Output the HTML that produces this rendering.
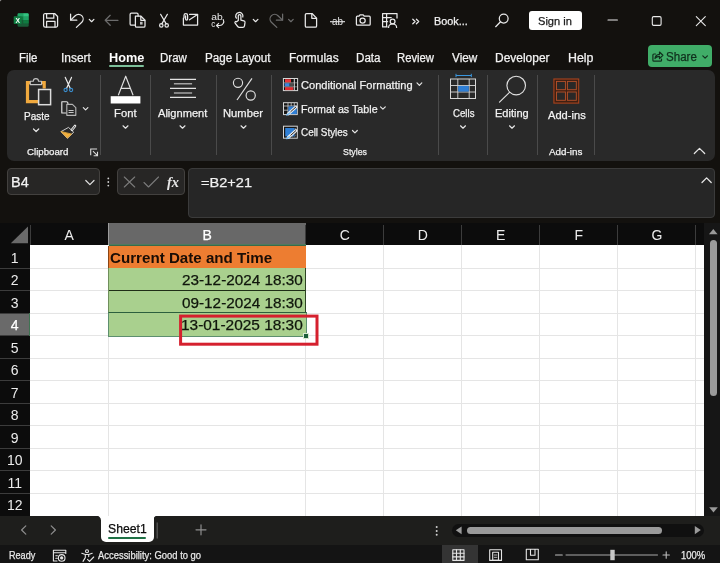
<!DOCTYPE html>
<html lang="en"><head><meta charset="utf-8"><title>Excel</title>
<style>
html,body{margin:0;padding:0;}
body{width:720px;height:563px;overflow:hidden;position:relative;background:#13110e;font-family:"Liberation Sans",sans-serif;}
div,span,svg{position:absolute;box-sizing:border-box;}
.t{white-space:nowrap;transform-origin:0 0;-webkit-text-stroke:0.25px currentColor;}
.ic{left:0;top:0;will-change:transform;}
.ribbon{left:7px;top:70px;width:708px;height:91px;background:#292929;border-radius:7px;}
.sep{width:1px;top:75px;height:80px;background:#4a4a4a;}
.signin{left:529px;top:11px;width:52.5px;height:19px;background:#fff;border-radius:3px;}
.share{left:648px;top:44.5px;width:63.5px;height:22.5px;background:#40ad68;border-radius:4px;}
.homeul{left:109px;top:64.5px;width:34.5px;height:2px;background:#7dc09a;border-radius:1px;}
.namebox{left:6.5px;top:168px;width:93.5px;height:27px;background:#272625;border:1px solid #43413f;border-radius:4px;}
.fxbox{left:117px;top:168px;width:68px;height:27px;background:#272625;border:1px solid #43413f;border-radius:4px;}
.fbox{left:188px;top:168px;width:527px;height:50px;background:#262626;border:1px solid #3b3b3b;border-radius:4px;}
.grid{left:0;top:223px;width:704px;height:292.5px;background:#fff;overflow:hidden;}
.colhead{left:0;top:0;width:704px;height:22px;background:#0c0c0c;}
.rowhead{left:0;top:22px;width:30px;height:271px;background:#0c0c0c;}
.vl{top:22px;width:1px;height:271px;background:#e5e5e5;}
.hl{left:30px;height:1px;width:674px;background:#e5e5e5;}
.chl{top:2px;width:1px;height:20px;background:#3c3c3c;}
.rhl{left:0;width:30px;height:1px;background:#3c3c3c;}
.vscroll{left:704px;top:223px;width:16px;height:292.5px;background:#161616;}
.vthumb{left:710px;top:240px;width:7px;height:156px;background:#9a9a9a;border-radius:3.5px;}
.tabbar{left:0;top:515.5px;width:720px;height:29.5px;background:#1e1e1c;}
.sheettab{left:100.5px;top:515.5px;width:53px;height:26.5px;background:#fff;border-radius:0 0 5px 5px;}
.sheetul{left:108px;top:536.8px;width:38px;height:2.2px;background:#1e7145;border-radius:1px;}
.status{left:0;top:545px;width:720px;height:18px;background:#141414;}
.viewsel{left:441.5px;top:545px;width:36px;height:18px;background:#343434;}
.hscroll{left:452px;top:524px;width:252px;height:13px;background:#101010;border-radius:6.5px;}
.hthumb{left:467px;top:526.5px;width:194.5px;height:7.7px;background:#9a9a9a;border-radius:4px;}
.texts{left:0;top:0;width:720px;height:563px;will-change:transform;}

</style></head>
<body>
<div class="ribbon"></div>
<div class="sep" style="left:100px"></div>
<div class="sep" style="left:150px"></div>
<div class="sep" style="left:216px"></div>
<div class="sep" style="left:271px"></div>
<div class="sep" style="left:438px"></div>
<div class="sep" style="left:487px"></div>
<div class="sep" style="left:537px"></div>
<div class="sep" style="left:594px"></div>
<div class="signin"></div>
<div class="share"></div>
<div class="homeul"></div>
<div class="namebox"></div>
<div class="fxbox"></div>
<div class="fbox"></div>
<div class="grid">
  <div class="colhead"></div>
  <div class="rowhead"></div>
  <!-- selected headers -->
  <div style="left:108.5px;top:0;width:197.5px;height:22px;background:#686868;"></div>
  <div style="left:0;top:90px;width:30px;height:22.5px;background:#6a6a6a;"></div>
  <!-- column header separators -->
  <div class="chl" style="left:30px"></div>
  <div class="chl" style="left:108px;background:#9c9c9c;top:0;height:22px"></div>
  <div class="chl" style="left:305px"></div>
  <div class="chl" style="left:383px"></div>
  <div class="chl" style="left:461px"></div>
  <div class="chl" style="left:539px"></div>
  <div class="chl" style="left:617px"></div>
  <div class="chl" style="left:695px"></div>
  <!-- vertical grid lines -->
  <div class="vl" style="left:108px"></div>
  <div class="vl" style="left:305px"></div>
  <div class="vl" style="left:383px"></div>
  <div class="vl" style="left:461px"></div>
  <div class="vl" style="left:539px"></div>
  <div class="vl" style="left:617px"></div>
  <div class="vl" style="left:695px"></div>
  <!-- horizontal grid lines -->
  <div class="hl" style="top:44.5px"></div>
  <div class="hl" style="top:67px"></div>
  <div class="hl" style="top:89.5px"></div>
  <div class="hl" style="top:112px"></div>
  <div class="hl" style="top:134.5px"></div>
  <div class="hl" style="top:157px"></div>
  <div class="hl" style="top:179.5px"></div>
  <div class="hl" style="top:202px"></div>
  <div class="hl" style="top:224.5px"></div>
  <div class="hl" style="top:247px"></div>
  <div class="hl" style="top:269.5px"></div>
  <div class="rhl" style="top:44.5px"></div>
  <div class="rhl" style="top:67px"></div>
  <div class="rhl" style="top:89.5px"></div>
  <div class="rhl" style="top:112px"></div>
  <div class="rhl" style="top:134.5px"></div>
  <div class="rhl" style="top:157px"></div>
  <div class="rhl" style="top:179.5px"></div>
  <div class="rhl" style="top:202px"></div>
  <div class="rhl" style="top:224.5px"></div>
  <div class="rhl" style="top:247px"></div>
  <div class="rhl" style="top:269.5px"></div>
  <!-- filled cells -->
  <div style="left:108.5px;top:23px;width:197.5px;height:22px;background:#ed7d31;"></div>
  <div style="left:108px;top:23px;width:1px;height:22px;background:#8a4515;"></div>
  <div style="left:108px;top:45px;width:1px;height:67px;background:#6f8f5c;"></div>
  <div style="left:108.5px;top:45px;width:197.5px;height:67.5px;background:#a9d08e;"></div>
  <div style="left:108.5px;top:66.5px;width:197.5px;height:1px;background:#1f2e17;"></div>
  <div style="left:108.5px;top:89px;width:197.5px;height:1px;background:#1f2e17;"></div>
  <div style="left:305px;top:45px;width:1px;height:45px;background:#2d4423;"></div>
  <!-- selection -->
  <div style="left:107.5px;top:89px;width:199px;height:24.5px;border:1.5px solid #5d8f6f;border-top-color:#2c5f3d;"></div>
  <div style="left:108.5px;top:21px;width:197.5px;height:1px;background:#4f7a5e;"></div>
  <div style="left:108.5px;top:22px;width:197.5px;height:1px;background:#3a6a4b;"></div>
  <div style="left:28.5px;top:90px;width:1.5px;height:22.5px;background:#3f7352;"></div>
  <div style="left:304px;top:111px;width:3.500px;height:3.500px;background:#1b5e3a;outline:0.600px solid #d8ead0;"></div>
</div>
<div class="vscroll"></div>
<div class="vthumb"></div>
<div class="tabbar"></div>
<div class="sheettab"></div>
<div class="sheetul"></div>
<div class="hscroll"></div>
<div class="hthumb"></div>
<div class="status"></div>
<div class="viewsel"></div>

<svg class="ic" width="720" height="563" viewBox="0 0 720 563">
<!-- ===== title bar ===== -->
<g id="excel-logo">
  <rect x="17.6" y="13.3" width="11.1" height="13.4" rx="1.2" fill="#185c37"/>
  <path d="M17.6 14.5a1.2 1.2 0 0 1 1.2-1.2h4.4v3.4h-5.6z" fill="#21a366"/>
  <path d="M23.2 13.3h4.3a1.2 1.2 0 0 1 1.2 1.2v2.2h-5.5z" fill="#33c481"/>
  <rect x="17.6" y="16.7" width="5.6" height="3.4" fill="#107c41"/>
  <rect x="23.2" y="16.7" width="5.5" height="3.4" fill="#21a366"/>
  <rect x="17.6" y="20.1" width="5.6" height="3.3" fill="#185c37"/>
  <rect x="23.2" y="20.1" width="5.5" height="3.3" fill="#107c41"/>
  <rect x="13.7" y="16.2" width="8" height="7.8" rx="0.8" fill="#107c41"/>
  <text x="17.7" y="22.6" font-family="Liberation Sans, sans-serif" font-weight="bold" font-size="6.8" fill="#ffffff" text-anchor="middle">X</text>
</g>
<g fill="none" stroke="#e9e9e9" stroke-width="1.25" stroke-linecap="round" stroke-linejoin="round">
  <!-- save -->
  <path d="M45 13.5h9.6l3 3v9a1.6 1.6 0 0 1-1.6 1.6H45.2a1.6 1.6 0 0 1-1.6-1.6v-10.4a1.6 1.6 0 0 1 1.4-1.6z"/>
  <path d="M46.6 13.6v4.6h7.2v-4.6"/>
  <path d="M46.6 27v-5.6h8.4V27"/>
  <!-- undo -->
  <path d="M70.6 14v6.2h6.2"/>
  <path d="M70.9 19.9l4.3-4.2a4.6 4.6 0 0 1 6.6 6.5l-5.4 5.2"/>
  <!-- chevron -->
  <path d="M89.3 19.4l2.3 2.3 2.3-2.3"/>
  <!-- copy/paste docs -->
  <path d="M135.4 25.2h-4a1.3 1.3 0 0 1-1.3-1.3v-9.5a1.3 1.3 0 0 1 1.3-1.3h5.4a1.3 1.3 0 0 1 1.3 1.3v1.6"/>
  <path d="M135.4 16.2h5.6l4 4v5.7a1.3 1.3 0 0 1-1.3 1.3h-7a1.3 1.3 0 0 1-1.3-1.3z"/>
  <path d="M140.8 16.4v3.9h4"/>
  <!-- scissors -->
  <path d="M160.6 14.3l5.6 9.6M167.4 14.3l-5.6 9.6"/>
  <circle cx="161.3" cy="25.4" r="1.7"/>
  <circle cx="166.7" cy="25.4" r="1.7"/>
  <!-- envelope with clip -->
  <path d="M183.4 18v7h14.2v-10.6h-8"/>
  <path d="M189.5 19.8l8-5.2"/>
  <path d="M184 17.8v-2.4a1.8 1.8 0 0 1 3.6 0v3.6a1 1 0 0 1-2 0v-3.2"/>
  <!-- touch hand -->
  <path d="M238.3 20.5v-4.6a1.3 1.3 0 0 1 2.6 0v4.2l3 .7a1.5 1.5 0 0 1 1.1 1.6l-.5 3.4a1.8 1.8 0 0 1-1.8 1.5h-3.4a2 2 0 0 1-1.6-.8l-2.6-3.4a1 1 0 0 1 1.5-1.3z"/>
  <path d="M236.4 18.2a3.6 3.6 0 1 1 6.4-1.2"/>
  <path d="M253.3 19.4l2.3 2.3 2.3-2.3"/>
  <!-- new doc -->
  <path d="M305.3 14.8a1.3 1.3 0 0 1 1.3-1.3h5.4l4.6 4.6v7.8a1.3 1.3 0 0 1-1.3 1.3h-8.7a1.3 1.3 0 0 1-1.3-1.3z"/>
  <path d="M311.8 13.7v4.6h4.6"/>
  <!-- camera -->
  <path d="M356.4 17.2a1 1 0 0 1 1-1h1.6l1-1.4h3.2l1 1.4h5a1 1 0 0 1 1 1v7a1 1 0 0 1-1 1h-11.8a1 1 0 0 1-1-1z"/>
  <circle cx="362.6" cy="20.6" r="2.6"/>
  <!-- table/person -->
  <path d="M390 13.5h-7.4v13.4h4.6M382.600 17.500h8.600M386.6 13.600v13.2M382.600 21.5h5M390.500 13.500h6.500v4.500"/>
  <circle cx="392.6" cy="21.4" r="2.4"/>
  <path d="M388.6 27.400a4 3.400 0 0 1 8 0"/>
  <!-- >> -->
  <path d="M412.800 19.200l2.300 2.300-2.300 2.300M416.400 19.200l2.300 2.300-2.300 2.300"/>
  <!-- search -->
  <circle cx="503.700" cy="18.600" r="4.400"/>
  <path d="M500.500 21.800l-4.800 4.900"/>
  <!-- window controls -->
  <path d="M608 20h9.400" stroke-width="1.1"/>
  <rect x="652.300" y="16.600" width="8.800" height="8.800" rx="1.300" stroke-width="1.100"/>
  <path d="M696.300 16.600l9 9M705.300 16.600l-9 9" stroke-width="1.100"/>
</g>
<!-- greyed -->
<g fill="none" stroke="#6c6c6c" stroke-width="1.250" stroke-linecap="round" stroke-linejoin="round">
  <path d="M118 20.300h-12.800M110.200 15.300l-5 5 5 5"/>
  <path d="M282.600 14v6.200h-6.200"/>
  <path d="M282.300 19.900l-4.300-4.200a4.600 4.600 0 0 0-6.600 6.500l5.400 5.200"/>
  <path d="M288.600 19.400l2.300 2.300 2.300-2.300"/>
</g>
<rect x="140" y="21.800" width="2.600" height="2.800" fill="#bdbdbd"/>
<!-- abc replace -->
<text x="211.200" y="20.200" font-family="Liberation Sans, sans-serif" font-size="8.200" fill="#e9e9e9" textLength="11.500" lengthAdjust="spacingAndGlyphs">ab</text>
<text x="211.200" y="27.200" font-family="Liberation Sans, sans-serif" font-size="8.200" fill="#e9e9e9">c</text>
<path d="M223.200 19.500a4 4 0 0 1-3.500 6h-3M218.700 23.300l-2.200 2.200 2.200 2.200" fill="none" stroke="#e9e9e9" stroke-width="1.100" stroke-linecap="round" stroke-linejoin="round"/>
<!-- strikethrough ab -->
<text x="332" y="25.300" font-family="Liberation Sans, sans-serif" font-size="10.500" fill="#e4e4e4" textLength="11" lengthAdjust="spacingAndGlyphs">ab</text>
<path d="M330 21.700h15" stroke="#e4e4e4" stroke-width="1.100"/>
<!-- share icon + chevron -->
<g fill="none" stroke="#10301d" stroke-width="1.200" stroke-linecap="round" stroke-linejoin="round">
  <path d="M655.500 54h-1.600a1 1 0 0 0-1 1v5.200a1 1 0 0 0 1 1h6.600a1 1 0 0 0 1-1v-1.200"/>
  <path d="M655 58.500c.3-2.500 1.800-4 4.500-4.200v-2.300l3.400 3.300-3.400 3.300v-2.200c-2 0-3.400.700-4.500 2.100z"/>
  <path d="M702.800 55.800l2.300 2.300 2.300-2.300"/>
</g>
<!-- ===== ribbon ===== -->
<!-- paste -->
<g fill="none" stroke-linejoin="miter" stroke-linecap="butt">
  <path d="M38.500 101.700H27.500V82.600h3.200M41.200 82.600h3V88.400" stroke="#f0a93e" stroke-width="3.200"/>
  <path d="M30.300 84.600v-3.400h3a2.600 2.600 0 0 1 5.200 0h3v3.400z" stroke="#c4c4c4" stroke-width="1.100" fill="#292929" stroke-linejoin="round"/>
  <rect x="38.600" y="89.500" width="12" height="15.200" stroke="#dcdcdc" stroke-width="1.500" fill="#292929"/>
  <path d="M33.500 129l2.600 2.500 2.600-2.500" stroke="#e6e6e6" stroke-width="1.200" stroke-linecap="round" stroke-linejoin="round"/>
</g>
<!-- scissors (ribbon) -->
<g fill="none" stroke-linecap="round">
  <path d="M65.300 77.400l5 11.200M71.500 77.400l-5 11.200" stroke="#ececec" stroke-width="1.200"/>
  <circle cx="65.600" cy="90" r="1.600" stroke="#3b8fd0" stroke-width="1.100"/>
  <circle cx="71.100" cy="90" r="1.600" stroke="#3b8fd0" stroke-width="1.100"/>
</g>
<!-- copy (ribbon) -->
<g fill="none" stroke-width="1.150" stroke-linejoin="round" stroke-linecap="round">
  <path d="M66.300 113h-4.500v-11.300h4.600a1.500 1.500 0 0 1 1.500 1.500v.600" stroke="#e6e6e6"/>
  <path d="M66.800 104.300h5.600l3.400 3.400v7.600h-9z" stroke="#b4b4b4" fill="#292929"/>
  <path d="M69 110.500h4.200M69 112.500h4.200" stroke="#c8c8c8"/>
  <path d="M83.300 107.600l2.300 2.300 2.300-2.300" stroke="#e6e6e6"/>
</g>
<!-- format painter -->
<g stroke-linejoin="round" stroke-linecap="round">
  <path d="M68.200 127.600L61 131.600l6.400 6.700 6-5.800z" fill="#292929" stroke="#dedede" stroke-width="0.900"/>
  <path d="M61.300 131.800l6.100 6.300 3.900-3.800z" fill="#f2b13e" stroke="#f2b13e" stroke-width="0.800"/>
  <path d="M72 129.800l3-3.800" fill="none" stroke="#e6e6e6" stroke-width="2.600"/>
  <path d="M72.200 129.600l2.600-3.300" fill="none" stroke="#333" stroke-width="0.800"/>
</g>
<!-- dialog launcher -->
<g fill="none" stroke="#dcdcdc" stroke-width="1.100" stroke-linecap="square">
  <path d="M96.500 149h-5.800v5.800"/>
  <path d="M93.400 151.600l3.800 3.800M97.500 152.400v3.300h-3.300"/>
</g>
<!-- font -->
<g>
  <path d="M118.300 95.200l7.400-19 7.400 19M121 88.400h9.500" fill="none" stroke="#e0e0e0" stroke-width="1.150" stroke-linejoin="round"/>
  <rect x="110.700" y="96.200" width="29.700" height="7.300" fill="#ffffff"/>
  <path d="M123 125.800l2.500 2.400 2.500-2.400M180 125.800l2.500 2.400 2.500-2.400M241 125.800l2.500 2.400 2.500-2.400M460.500 125.800l2.500 2.400 2.500-2.400M509.500 125.800l2.500 2.400 2.500-2.400" fill="none" stroke="#e6e6e6" stroke-width="1.200" stroke-linecap="round" stroke-linejoin="round"/>
</g>
<!-- alignment -->
<g fill="none">
  <path d="M170 79.300h26M170 88.400h26M170 97.400h26" stroke="#e2e2e2" stroke-width="1.250"/>
  <path d="M173.900 83.800h18.200M173.900 93h18.200" stroke="#a2a2a2" stroke-width="1.500"/>
</g>
<!-- percent -->
<g fill="none" stroke="#e0e0e0" stroke-width="1.150">
  <circle cx="238" cy="82.800" r="4.600"/>
  <circle cx="250.700" cy="95.500" r="4.600"/>
  <path d="M252 78.300l-15 21.700"/>
</g>
<!-- conditional formatting -->
<g>
  <rect x="283.400" y="78.500" width="14.200" height="12.100" fill="#141414" stroke="#d6d6d6" stroke-width="1"/>
  <rect x="285" y="79.200" width="6" height="3.300" fill="#e8363a"/>
  <rect x="284.600" y="83.200" width="5" height="3.200" fill="#3b86e0"/>
  <rect x="290" y="83.200" width="3.200" height="3.200" fill="#4a4a4a"/>
  <rect x="285" y="87.100" width="8.200" height="3" fill="#e02a2e"/>
  <path d="M284 82.800h13M284 86.800h13" stroke="#bdbdbd" stroke-width="0.600"/>
  <path d="M294.300 79v11.200" stroke="#dcdcdc" stroke-width="1"/>
</g>
<!-- format as table -->
<g>
  <rect x="283.500" y="102.700" width="13.800" height="11.900" fill="#161616" stroke="#d6d6d6" stroke-width="1"/>
  <path d="M284 106h13M284 110.200h4M288 103v11.400M291.200 103v3M294.300 103v3" stroke="#d0d0d0" stroke-width="0.800"/>
  <rect x="288.400" y="106.400" width="8.400" height="7.700" fill="#2f7fd6"/>
  <path d="M288.300 113.800l7.600-6.800" stroke="#ececec" stroke-width="3" stroke-linecap="round"/>
  <path d="M290.800 111.600l5-4.500" stroke="#2a2a2a" stroke-width="1" stroke-linecap="round"/>
  <path d="M286.800 114.900l2.800-1.700" stroke="#7fc0f5" stroke-width="1.600" stroke-linecap="round"/>
</g>
<!-- cell styles -->
<g>
  <rect x="283.500" y="126.200" width="13.800" height="12" fill="#161616" stroke="#d6d6d6" stroke-width="1"/>
  <rect x="285.200" y="128" width="9.400" height="8.400" fill="#2f7fd6"/>
  <path d="M295.400 128v8.800h-9" stroke="#9a9a9a" stroke-width="0.700" fill="none" stroke-dasharray="1.200 1"/>
  <path d="M288.300 137.400l7.600-6.800" stroke="#ececec" stroke-width="3" stroke-linecap="round"/>
  <path d="M290.800 135.200l5-4.500" stroke="#2a2a2a" stroke-width="1" stroke-linecap="round"/>
  <path d="M286.800 138.500l2.800-1.700" stroke="#7fc0f5" stroke-width="1.600" stroke-linecap="round"/>
</g>
<g fill="none" stroke="#e6e6e6" stroke-width="1.200" stroke-linecap="round" stroke-linejoin="round">
  <path d="M417 82.900l2.400 2.400 2.400-2.400M380.500 106.800l2.400 2.400 2.400-2.400M352.500 130.500l2.400 2.400 2.400-2.400"/>
</g>
<!-- cells -->
<g>
  <path d="M456 73.800v3.400M471.300 73.800v3.400M456 75.500h15.300" stroke="#3a96dd" stroke-width="1" fill="none"/>
  <rect x="450.500" y="79" width="25" height="19.500" fill="#292929" stroke="#d8d8d8" stroke-width="1"/>
  <path d="M450.500 85.500h25M450.500 92h25M457.800 79v19.500M469.200 79v19.500" stroke="#d8d8d8" stroke-width="0.900"/>
  <rect x="458.200" y="85.900" width="10.600" height="5.700" fill="#2f7fd6"/>
</g>
<!-- editing (magnifier) -->
<g fill="none" stroke="#e0e0e0" stroke-width="1.150" stroke-linecap="round">
  <circle cx="516.200" cy="85.600" r="9.300"/>
  <path d="M509.500 92.300l-10 9.800"/>
</g>
<!-- add-ins -->
<g stroke-width="0.900">
  <rect x="553.900" y="79" width="24.800" height="24.100" fill="#3e1f12" stroke="#a9431e" stroke-width="1.100"/>
  <rect x="556.500" y="81.400" width="8.900" height="8.300" fill="#2a2827" stroke="#b8522b"/>
  <rect x="567.400" y="81.400" width="8.900" height="8.300" fill="#2a2827" stroke="#b8522b"/>
  <rect x="556.500" y="92" width="8.900" height="8.300" fill="#2a2827" stroke="#b8522b"/>
  <rect x="567.400" y="92" width="8.900" height="8.300" fill="#2a2827" stroke="#b8522b"/>
</g>
<!-- collapse ribbon -->
<path d="M694.300 153.500l5.200-5.200 5.200 5.200" fill="none" stroke="#e6e6e6" stroke-width="1.200" stroke-linecap="round" stroke-linejoin="round"/>
<!-- ===== formula bar ===== -->
<g fill="none" stroke-linecap="round" stroke-linejoin="round">
  <path d="M85.800 180.500l4.100 4.100 4.100-4.100" stroke="#e0e0e0" stroke-width="1.200"/>
  <circle cx="108.300" cy="178.400" r="0.900" fill="#d0d0d0"/>
  <circle cx="108.300" cy="182" r="0.900" fill="#d0d0d0"/>
  <circle cx="108.300" cy="185.600" r="0.900" fill="#d0d0d0"/>
  <path d="M124.300 177l10.400 10M134.700 177l-10.400 10" stroke="#7a7a7a" stroke-width="1.100"/>
  <path d="M144 182.500l4.500 4.500 10-10" stroke="#7a7a7a" stroke-width="1.100"/>
  <path d="M702 182.500l4.600-4.600 4.600 4.600" stroke="#e6e6e6" stroke-width="1.300"/>
</g>
<!-- ===== grid ===== -->
<path d="M28 226.500v16.800h-17.200z" fill="#6a6a6a"/>
<path d="M709 234.200l4.300-5.200 4.300 5.200z" fill="#9a9a9a"/>
<path d="M709.200 507.200l4.300 5.400 4.300-5.400z" fill="#9a9a9a"/>
<!-- ===== tab bar ===== -->
<g fill="none" stroke="#8e8e8e" stroke-width="1.200" stroke-linecap="round" stroke-linejoin="round">
  <path d="M25.800 525.800l-4.200 4.200 4.200 4.200M51.200 525.800l4.200 4.200-4.200 4.200"/>
  <path d="M196 529.800h10M201 524.800v10"/>
</g>
<path d="M157.200 522.500v16" stroke="#5a5a5a" stroke-width="1.200"/>
<path d="M96 515.500h5v5a5 5 0 0 0-5-5zM158 515.500h-5v5a5 5 0 0 1 5-5z" fill="#ffffff"/>
<circle cx="436.700" cy="527" r="1" fill="#d0d0d0"/><circle cx="436.700" cy="530.900" r="1" fill="#d0d0d0"/><circle cx="436.700" cy="534.800" r="1" fill="#d0d0d0"/>
<path d="M461.600 526.400v7.800l-5.800-3.900z" fill="#9a9a9a"/>
<path d="M694.800 526v8.200l6-4.100z" fill="#9a9a9a"/>
<!-- ===== status bar ===== -->
<g fill="none" stroke="#e6e6e6" stroke-width="1.100" stroke-linejoin="round" stroke-linecap="round">
  <!-- macro record -->
  <path d="M57 561h-3.600v-10.700h12.400v3.200M53.400 552.800h12.400M55.800 555.800h1.600M55.800 558.200h1.600"/>
  <circle cx="61.700" cy="557.900" r="3.300"/>
  <circle cx="61.700" cy="557.900" r="1.100" fill="#e6e6e6"/>
  <!-- accessibility -->
  <circle cx="87" cy="551.200" r="1.500"/>
  <path d="M81.800 553.300l3.500 1.200h3.400l3.500-1.200M85.300 554.600v3l-2.300 3.800M88.700 554.600v2"/>
  <path d="M87.500 559.300l2 2 4.200-4.300"/>
  <!-- normal view -->
  <rect x="452.800" y="549.800" width="11.200" height="10.600"/>
  <path d="M456.500 549.800v10.600M460.300 549.800v10.600M452.800 553.300h11.200M452.800 556.900h11.200"/>
  <!-- page layout -->
  <rect x="489.700" y="549.800" width="11.800" height="10.600"/>
  <rect x="492.700" y="552.300" width="5.800" height="8.100"/>
  <path d="M494.300 555h2.600M494.300 557.300h2.600" stroke-width="0.800"/>
  <!-- page break -->
  <path d="M526.300 549.300v10.500h12v-10.500M530.500 549.300v6h4.500v-6M526.300 549.300h12" />
  <!-- zoom -->
  <path d="M555.500 555h6.800M663 555h6.400M666.200 551.800v6.400" stroke="#bdbdbd"/>
  <path d="M566 555h91.500" stroke="#a8a8a8" stroke-width="1"/>
</g>
<rect x="610.300" y="549.800" width="4.400" height="10.400" fill="#c8c8c8"/>
<!-- red annotation box -->
<rect x="180.600" y="316.100" width="136.400" height="28.100" fill="none" stroke="#d5202e" stroke-width="3"/>
<!-- window corner -->
<path d="M0 0h1.800a1.800 1.800 0 0 0-1.800 1.800z" fill="#c8c8c8"/>

</svg>
<div class="texts">
<span class="t" style="top:16.09px;font-size:11px;line-height:11px;color:#f2f2f2;left:433.95px;transform:scaleX(0.9881);">Book...</span>
<span class="t" style="top:16.09px;font-size:11px;line-height:11px;color:#1b1b1b;left:538.33px;transform:scaleX(1.0055);">Sign in</span>
<span class="t" style="top:51.84px;font-size:12px;line-height:12px;color:#f2f2f2;left:18.93px;transform:scaleX(0.9551);">File</span>
<span class="t" style="top:51.84px;font-size:12px;line-height:12px;color:#f2f2f2;left:60.84px;transform:scaleX(0.9940);">Insert</span>
<span class="t" style="top:51.84px;font-size:12px;line-height:12px;color:#f2f2f2;left:159.61px;transform:scaleX(0.9610);">Draw</span>
<span class="t" style="top:51.84px;font-size:12px;line-height:12px;color:#f2f2f2;left:204.59px;transform:scaleX(0.9706);">Page Layout</span>
<span class="t" style="top:51.84px;font-size:12px;line-height:12px;color:#f2f2f2;left:288.73px;transform:scaleX(0.9929);">Formulas</span>
<span class="t" style="top:51.84px;font-size:12px;line-height:12px;color:#f2f2f2;left:355.64px;transform:scaleX(0.9683);">Data</span>
<span class="t" style="top:51.84px;font-size:12px;line-height:12px;color:#f2f2f2;left:396.79px;transform:scaleX(0.9403);">Review</span>
<span class="t" style="top:51.84px;font-size:12px;line-height:12px;color:#f2f2f2;left:452.06px;transform:scaleX(0.9813);">View</span>
<span class="t" style="top:51.84px;font-size:12px;line-height:12px;color:#f2f2f2;left:495.47px;transform:scaleX(0.9969);">Developer</span>
<span class="t" style="top:51.84px;font-size:12px;line-height:12px;color:#f2f2f2;left:568.36px;transform:scaleX(1.0326);">Help</span>
<span class="t" style="top:51.84px;font-size:12px;line-height:12px;color:#ffffff;font-weight:bold;-webkit-text-stroke:0;left:108.69px;transform:scaleX(1.0588);">Home</span>
<span class="t" style="top:51.34px;font-size:12px;line-height:12px;color:#10301d;left:665.78px;transform:scaleX(0.9630);">Share</span>
<span class="t" style="top:111.23px;font-size:10.6px;line-height:10.6px;color:#f2f2f2;left:23.75px;transform:scaleX(0.9410);">Paste</span>
<span class="t" style="top:146.90px;font-size:9.8px;line-height:9.8px;color:#f2f2f2;left:27.40px;transform:scaleX(0.9883);">Clipboard</span>
<span class="t" style="top:107.59px;font-size:11px;line-height:11px;color:#f2f2f2;left:114.01px;transform:scaleX(1.0238);">Font</span>
<span class="t" style="top:107.59px;font-size:11px;line-height:11px;color:#f2f2f2;left:158.09px;transform:scaleX(1.0079);">Alignment</span>
<span class="t" style="top:107.59px;font-size:11px;line-height:11px;color:#f2f2f2;left:223.20px;transform:scaleX(1.0195);">Number</span>
<span class="t" style="top:80.07px;font-size:11.5px;line-height:11.5px;color:#f2f2f2;left:301.00px;transform:scaleX(0.9641);">Conditional Formatting</span>
<span class="t" style="top:103.97px;font-size:11.5px;line-height:11.5px;color:#f2f2f2;left:300.98px;transform:scaleX(0.9318);">Format as Table</span>
<span class="t" style="top:127.47px;font-size:11.5px;line-height:11.5px;color:#f2f2f2;left:301.00px;transform:scaleX(0.8611);">Cell Styles</span>
<span class="t" style="top:146.90px;font-size:9.8px;line-height:9.8px;color:#f2f2f2;left:342.80px;transform:scaleX(0.8993);">Styles</span>
<span class="t" style="top:107.59px;font-size:11px;line-height:11px;color:#f2f2f2;left:452.60px;transform:scaleX(0.8778);">Cells</span>
<span class="t" style="top:107.59px;font-size:11px;line-height:11px;color:#f2f2f2;left:495.29px;transform:scaleX(1.0023);">Editing</span>
<span class="t" style="top:110.07px;font-size:11.5px;line-height:11.5px;color:#f2f2f2;left:547.68px;transform:scaleX(0.9671);">Add-ins</span>
<span class="t" style="top:146.90px;font-size:9.8px;line-height:9.8px;color:#f2f2f2;left:548.89px;transform:scaleX(1.0028);">Add-ins</span>
<span class="t" style="top:175.52px;font-size:13.8px;line-height:13.8px;color:#f2f2f2;left:10.95px;transform:scaleX(1.0510);">B4</span>
<span class="t" style="top:175.57px;font-size:13.5px;line-height:13.5px;color:#f2f2f2;left:201.21px;transform:scaleX(1.0785);">=B2+21</span>
<span class="t" style="top:174.80px;font-size:15px;line-height:15px;color:#e6e6e6;font-weight:bold;-webkit-text-stroke:0;font-style:italic;font-family:'Liberation Serif',serif;left:167.00px;transform:scaleX(0.9600);">fx</span>
<span class="t" style="top:228.45px;font-size:14px;line-height:14px;color:#ececec;-webkit-text-stroke:0;left:64.58px;">A</span>
<span class="t" style="top:228.45px;font-size:14px;line-height:14px;color:#ffffff;left:202.45px;">B</span>
<span class="t" style="top:228.45px;font-size:14px;line-height:14px;color:#ececec;-webkit-text-stroke:0;left:339.69px;">C</span>
<span class="t" style="top:228.45px;font-size:14px;line-height:14px;color:#ececec;-webkit-text-stroke:0;left:417.69px;">D</span>
<span class="t" style="top:228.45px;font-size:14px;line-height:14px;color:#ececec;-webkit-text-stroke:0;left:496.08px;">E</span>
<span class="t" style="top:228.45px;font-size:14px;line-height:14px;color:#ececec;-webkit-text-stroke:0;left:574.47px;">F</span>
<span class="t" style="top:228.45px;font-size:14px;line-height:14px;color:#ececec;-webkit-text-stroke:0;left:651.43px;">G</span>
<span class="t" style="top:250.95px;font-size:14px;line-height:14px;color:#ececec;-webkit-text-stroke:0;left:10.80px;">1</span>
<span class="t" style="top:273.45px;font-size:14px;line-height:14px;color:#ececec;-webkit-text-stroke:0;left:10.80px;">2</span>
<span class="t" style="top:295.95px;font-size:14px;line-height:14px;color:#ececec;-webkit-text-stroke:0;left:10.80px;">3</span>
<span class="t" style="top:318.45px;font-size:14px;line-height:14px;color:#ffffff;left:10.80px;">4</span>
<span class="t" style="top:340.95px;font-size:14px;line-height:14px;color:#ececec;-webkit-text-stroke:0;left:10.80px;">5</span>
<span class="t" style="top:363.45px;font-size:14px;line-height:14px;color:#ececec;-webkit-text-stroke:0;left:10.80px;">6</span>
<span class="t" style="top:385.95px;font-size:14px;line-height:14px;color:#ececec;-webkit-text-stroke:0;left:10.80px;">7</span>
<span class="t" style="top:408.45px;font-size:14px;line-height:14px;color:#ececec;-webkit-text-stroke:0;left:10.80px;">8</span>
<span class="t" style="top:430.95px;font-size:14px;line-height:14px;color:#ececec;-webkit-text-stroke:0;left:10.80px;">9</span>
<span class="t" style="top:453.45px;font-size:14px;line-height:14px;color:#ececec;-webkit-text-stroke:0;left:6.91px;">10</span>
<span class="t" style="top:475.95px;font-size:14px;line-height:14px;color:#ececec;-webkit-text-stroke:0;left:7.43px;">11</span>
<span class="t" style="top:498.45px;font-size:14px;line-height:14px;color:#ececec;-webkit-text-stroke:0;left:6.91px;">12</span>
<span class="t" style="top:250.95px;font-size:14px;line-height:14px;color:#1a0d05;font-weight:bold;-webkit-text-stroke:0;left:110.13px;transform:scaleX(1.0816);">Current Date and Time</span>
<span class="t" style="top:273.25px;font-size:14px;line-height:14px;color:#10160c;left:182.40px;transform:scaleX(1.0928);">23-12-2024 18:30</span>
<span class="t" style="top:295.65px;font-size:14px;line-height:14px;color:#10160c;left:182.40px;transform:scaleX(1.0928);">09-12-2024 18:30</span>
<span class="t" style="top:318.15px;font-size:14px;line-height:14px;color:#10160c;left:181.38px;transform:scaleX(1.1016);">13-01-2025 18:30</span>
<span class="t" style="top:521.97px;font-size:13.5px;line-height:13.5px;color:#0c0c0c;left:107.58px;transform:scaleX(0.9053);">Sheet1</span>
<span class="t" style="top:550.41px;font-size:10.5px;line-height:10.5px;color:#e8e8e8;left:9.32px;transform:scaleX(0.8648);">Ready</span>
<span class="t" style="top:549.51px;font-size:10.5px;line-height:10.5px;color:#e8e8e8;left:98.28px;transform:scaleX(0.8966);">Accessibility: Good to go</span>
<span class="t" style="top:550.31px;font-size:10.5px;line-height:10.5px;color:#e8e8e8;left:680.83px;transform:scaleX(0.9023);">100%</span>
</div>
</body></html>
